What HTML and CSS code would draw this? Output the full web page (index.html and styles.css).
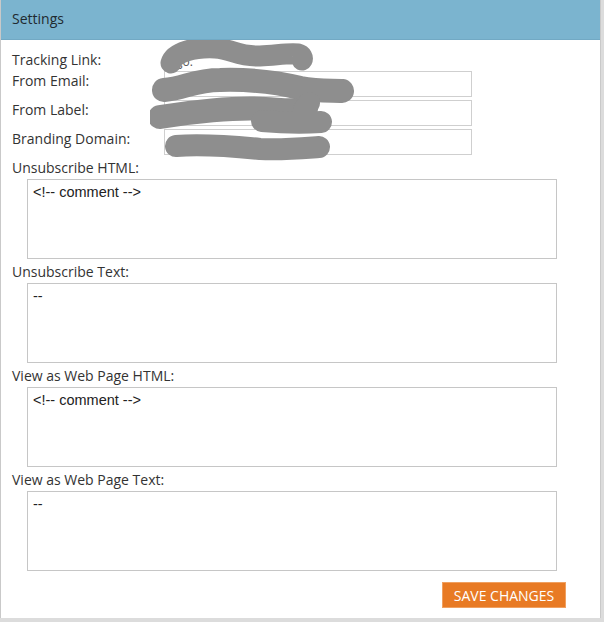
FILE: index.html
```html
<!DOCTYPE html>
<html lang="en">

<head>
    <meta charset="UTF-8">
    <meta name="viewport" content="width=device-width, initial-scale=1.0">
    <title>Settings</title>
    <link rel="stylesheet" href="styles.css">
</head>

<body>
    <div class="panel">
        <div class="panel-header">Settings</div>

        <div class="panel-body">
            <div class="field-row tracking">
                <label>Tracking Link:</label>
                <span class="value">go.</span>
            </div>
            <div class="field-row">
                <label for="fromEmail">From Email:</label>
                <input type="text" id="fromEmail" value="">
            </div>
            <div class="field-row">
                <label for="fromLabel">From Label:</label>
                <input type="text" id="fromLabel" value="">
            </div>
            <div class="field-row">
                <label for="brandingDomain">Branding Domain:</label>
                <input type="text" id="brandingDomain" value="">
            </div>

            <div class="area-block">
                <label for="unsubHtml">Unsubscribe HTML:</label>
                <textarea id="unsubHtml"><!-- comment --></textarea>
            </div>
            <div class="area-block">
                <label for="unsubText">Unsubscribe Text:</label>
                <textarea id="unsubText">--</textarea>
            </div>
            <div class="area-block">
                <label for="webHtml">View as Web Page HTML:</label>
                <textarea id="webHtml"><!-- comment --></textarea>
            </div>
            <div class="area-block">
                <label for="webText">View as Web Page Text:</label>
                <textarea id="webText">--</textarea>
            </div>

            <div class="actions">
                <button class="save-btn">SAVE CHANGES</button>
            </div>

            <!-- redacted values -->
            <svg class="redact" width="220" height="130" viewBox="150 40 220 130">
                <g fill="none" stroke="#8e8e8e" stroke-linecap="round" stroke-linejoin="round">
                    <path d="M171 63 C174 52 195 47 215 48 C232 49 238 57 260 56 C278 55 288 53 298 54 C302 55 303 58 302 60" stroke-width="21" />
                    <path d="M164 90 C185 88 195 80 220 80 C255 79 280 83 300 88 C320 92 335 90 342 91" stroke-width="24" />
                    <path d="M160 117 C190 112 235 107 265 109 C285 110 298 112 306 108" stroke-width="24" />
                    <path d="M262 121 C285 123 305 123 321 122 M304 110 L309 103" stroke-width="22" />
                    <path d="M176 146 C200 144 230 146 260 149 C285 150 305 148 319 147" stroke-width="22" />
                </g>
            </svg>
        </div>
    </div>
</body>

</html>
```

FILE: styles.css
```css
body {
    margin: 0;
    background-color: #dcdcdc;
    font-family: "Open Sans", Arial, sans-serif;
    color: #333;
}
.panel {
    width: 599px;
    height: 618px;
    background-color: white;
    border: 1px solid #c9c9c9;
    border-top: none;
    border-bottom: none;
}
.panel-header {
    height: 39px;
    line-height: 38px;
    padding-left: 11px;
    background-color: #7bb4cf;
    border-bottom: 1px solid #72a9c4;
    font-size: 14px;
    color: #1f2a30;
}
.panel-body {
    position: relative;
    padding: 10px 0 0 11px;
    font-size: 14px;
}
.field-row {
    display: flex;
    align-items: flex-start;
    margin-bottom: 3px;
}
.field-row label {
    width: 152px;
    line-height: 20px;
}
.field-row.tracking {
    margin-bottom: 1px;
    height: 20px;
}
.field-row .value {
    padding-left: 12px;
    line-height: 24px;
    font-size: 12px;
    color: #555;
}
.field-row input {
    box-sizing: border-box;
    width: 308px;
    height: 26px;
    margin: 0;
    padding: 0 5px;
    border: 1px solid #cfcfcf;
    font-family: "Liberation Sans", Arial, sans-serif;
    font-size: 13px;
}
.area-block {
    margin-bottom: 4px;
}
.field-row + .area-block {
    margin-top: 4px;
}
.area-block label {
    display: block;
    line-height: 18px;
    margin-bottom: 2px;
}
.area-block textarea {
    display: block;
    box-sizing: border-box;
    width: 530px;
    height: 80px;
    margin: 0 0 0 15px;
    padding: 4px 5px;
    border: 1px solid #c6c6c6;
    resize: none;
    font-family: "Liberation Sans", Arial, sans-serif;
    font-size: 14.5px;
    color: #222;
}
.actions {
    display: flex;
    justify-content: flex-end;
    padding-right: 34px;
    margin-top: 11px;
}
.save-btn {
    background-color: #e87a24;
    color: white;
    border: 1px solid #f0a060;
    width: 124px;
    height: 26px;
    padding: 0;
    font-family: "Open Sans", Arial, sans-serif;
    font-size: 14px;
    cursor: pointer;
}
.redact {
    position: absolute;
    left: 149px;
    top: 0;
}
```
